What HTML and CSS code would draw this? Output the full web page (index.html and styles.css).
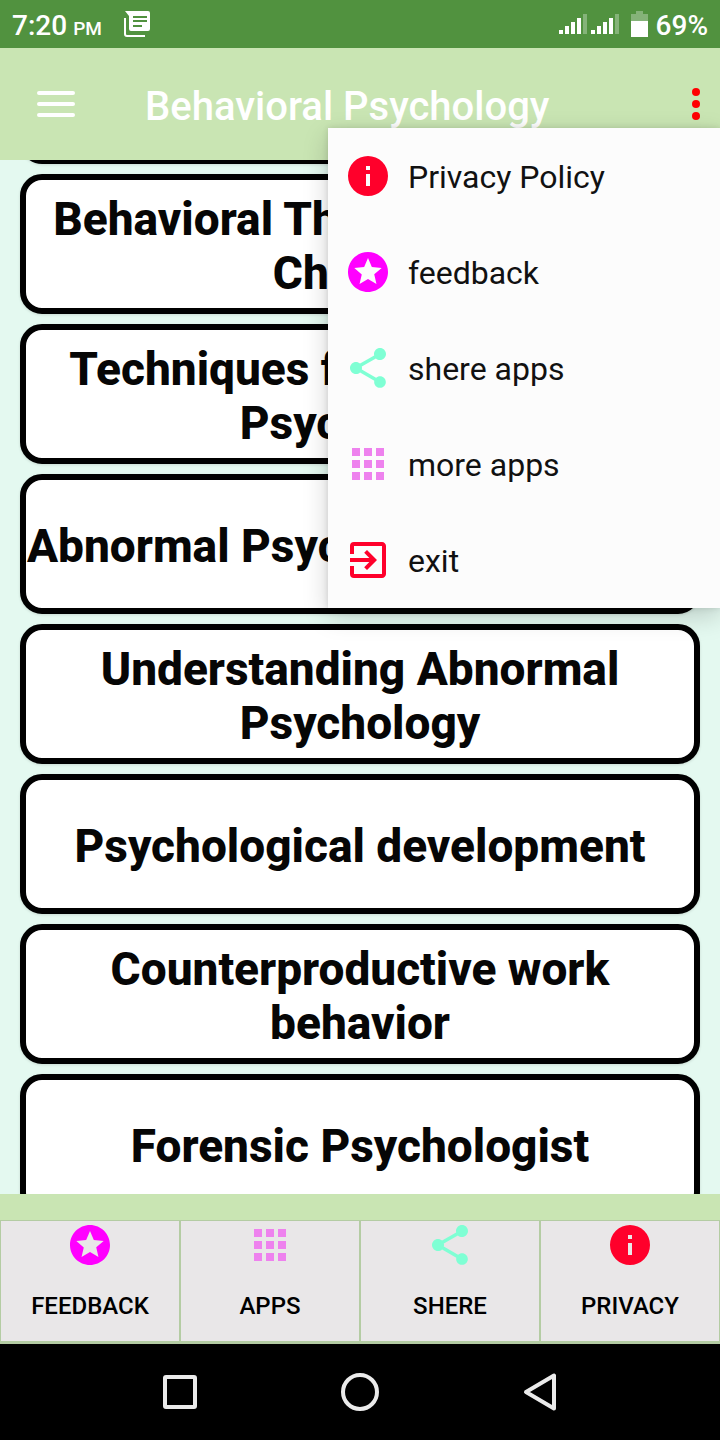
FILE: index.html
```html
<!DOCTYPE html>
<html lang="en">
<head>
<meta charset="utf-8">
<meta name="viewport" content="width=device-width, initial-scale=1">
<title>Behavioral Psychology</title>
<link rel="stylesheet" href="styles.css">
</head>
<body>
<svg class="sprite" aria-hidden="true">
  <symbol id="i-info" viewBox="0 0 24 24"><path d="M12 2a10 10 0 1 0 0 20 10 10 0 0 0 0-20zm1 15h-2v-6h2v6zm0-8h-2V7h2v2z"/></symbol>
  <symbol id="i-star" viewBox="0 0 24 24"><path d="M11.99 2C6.47 2 2 6.48 2 12s4.47 10 9.99 10C17.52 22 22 17.52 22 12S17.52 2 11.99 2zm4.24 16L12 15.45 7.77 18l1.12-4.81-3.73-3.23 4.92-.42L12 5l1.92 4.53 4.92.42-3.73 3.23L16.23 18z"/></symbol>
  <symbol id="i-share" viewBox="0 0 24 24"><path d="M18 16.08c-.76 0-1.44.3-1.96.77L8.91 12.7c.05-.23.09-.46.09-.7s-.04-.47-.09-.7l7.05-4.11c.54.5 1.25.81 2.04.81 1.66 0 3-1.34 3-3s-1.34-3-3-3-3 1.34-3 3c0 .24.04.47.09.7L8.04 9.81C7.5 9.31 6.79 9 6 9c-1.66 0-3 1.34-3 3s1.34 3 3 3c.79 0 1.5-.31 2.04-.81l7.12 4.16c-.05.21-.08.43-.08.65 0 1.61 1.31 2.92 2.92 2.92s2.92-1.31 2.92-2.92-1.31-2.92-2.92-2.92z"/></symbol>
  <symbol id="i-apps" viewBox="0 0 24 24"><path d="M4 8h4V4H4v4zm6 12h4v-4h-4v4zm-6 0h4v-4H4v4zm0-6h4v-4H4v4zm6 0h4v-4h-4v4zm6-10v4h4V4h-4zm-6 4h4V4h-4v4zm6 6h4v-4h-4v4zm0 6h4v-4h-4v4z"/></symbol>
  <symbol id="i-exit" viewBox="0 0 24 24"><path d="M10.09 15.59L11.5 17l5-5-5-5-1.41 1.41L12.67 11H3v2h9.67l-2.58 2.59zM19 3H5a2 2 0 0 0-2 2v4h2V5h14v14H5v-4H3v4a2 2 0 0 0 2 2h14c1.1 0 2-.9 2-2V5c0-1.1-.9-2-2-2z"/></symbol>
</svg>
<div class="screen">
  <div class="status">
    <span class="clock">7:20<small>PM</small></span>
    <svg class="news" viewBox="0 0 26 26" width="26" height="26" aria-hidden="true"><path fill="#fff" fill-rule="evenodd" d="M1 0h23q2 0 2 2v16q0 2-2 2H7q-2 0-2-2V5zM9 5v2h14V5zM9 9v2h14V9zM9 14v2h9v-2z"/><path fill="none" stroke="#fff" stroke-width="2" d="M1 7v16q0 2 2 2h18"/></svg>
    <svg class="signal" viewBox="0 0 60 20" width="60" height="20" aria-hidden="true"><g fill="#fff"><path d="M0 16h4v4H0zM6 12h4v8H6zM12 8h4v12h-4zM18 4h4v16h-4zM32 16h4v4h-4zM38 12h4v8h-4zM44 8h4v12h-4zM50 4h4v16h-4z"/><path opacity=".3" d="M24 0h4v20h-4zM56 0h4v20h-4z"/></g></svg>
    <svg class="battery" viewBox="0 0 17 26" width="17" height="26" aria-hidden="true"><path fill="#fff" opacity=".3" d="M5 0h7v3h5v7H0V3h5z"/><path fill="#fff" d="M0 10h17v16H0z"/></svg>
    <span class="percent">69%</span>
  </div>
  <header class="appbar">
    <button class="icon-button" aria-label="Open navigation"><svg viewBox="0 0 38 26" width="38" height="26"><path stroke="#fff" stroke-width="4" stroke-linecap="round" d="M2 2h34M2 13h34M2 24h34"/></svg></button>
    <h1>Behavioral Psychology</h1>
    <button class="icon-button more" aria-label="More options"><svg viewBox="0 0 8 32" width="8" height="32" fill="red"><circle cx="4" cy="4" r="4"/><circle cx="4" cy="16" r="4"/><circle cx="4" cy="28" r="4"/></svg></button>
  </header>
  <main class="topics">
    <div class="topic-list">
      <button class="topic">Psychology</button>
      <button class="topic">Behavioral Therapy for Young<br>Children</button>
      <button class="topic">Techniques from Behavioral<br>Psychology</button>
      <button class="topic">Abnormal Psychology Disorders</button>
      <button class="topic">Understanding Abnormal Psychology</button>
      <button class="topic">Psychological development</button>
      <button class="topic">Counterproductive work behavior</button>
      <button class="topic">Forensic Psychologist</button>
    </div>
  </main>
  <footer class="actions">
    <button class="action"><svg class="icon magenta"><use href="#i-star"/></svg><span>FEEDBACK</span></button>
    <button class="action"><svg class="icon violet"><use href="#i-apps"/></svg><span>APPS</span></button>
    <button class="action"><svg class="icon aqua"><use href="#i-share"/></svg><span>SHERE</span></button>
    <button class="action"><svg class="icon red"><use href="#i-info"/></svg><span>PRIVACY</span></button>
  </footer>
  <nav class="system" aria-label="System">
    <button class="icon-button" aria-label="Recent"><svg viewBox="0 0 40 40" width="40" height="40"><rect x="5" y="5" width="30" height="30" rx="1"/></svg></button>
    <button class="icon-button" aria-label="Home"><svg viewBox="0 0 40 40" width="40" height="40"><circle cx="20" cy="20" r="17"/></svg></button>
    <button class="icon-button" aria-label="Back"><svg viewBox="0 0 40 40" width="40" height="40"><path d="M34 3.500v33L6 20z"/></svg></button>
  </nav>
  <div class="menu" role="menu">
    <button class="menu-item" role="menuitem"><svg class="icon red"><use href="#i-info"/></svg><span>Privacy Policy</span></button>
    <button class="menu-item" role="menuitem"><svg class="icon magenta"><use href="#i-star"/></svg><span>feedback</span></button>
    <button class="menu-item" role="menuitem"><svg class="icon aqua"><use href="#i-share"/></svg><span>shere apps</span></button>
    <button class="menu-item" role="menuitem"><svg class="icon violet"><use href="#i-apps"/></svg><span>more apps</span></button>
    <button class="menu-item" role="menuitem"><svg class="icon red"><use href="#i-exit"/></svg><span>exit</span></button>
  </div>
</div>
</body>
</html>
```
FILE: styles.css
```css
* { box-sizing: border-box; }
body { margin: 0; font-family: Roboto, "Liberation Sans", sans-serif; }
button { font: inherit; color: inherit; border: 0; padding: 0; background: none; }
svg { display: block; flex: none; }
.sprite { position: absolute; width: 0; height: 0; }
.screen { position: relative; height: 100vh; display: flex; flex-direction: column; overflow: hidden; background: #e4f9f0; }

.status { flex: none; height: 48px; display: flex; align-items: center; padding: 0 12px; background: #51923f; color: #fff; font-size: 28px; font-weight: 500; }
.clock, .percent { padding-top: 2px; }
.clock small { margin-left: 6px; font-size: 19px; }
.news { margin-left: 22px; }
.signal { margin-left: auto; }
.battery { margin: 0 8px 0 12px; }

.appbar { flex: none; height: 112px; display: flex; align-items: center; padding: 0 20px 0 37px; background: #c9e5b3; color: #fff; }
.appbar h1 { flex: 1; margin: 6px 0 0 70px; font-size: 40px; font-weight: 500; line-height: 48px; }
.icon-button { display: flex; align-items: center; justify-content: center; }

.topics { flex: 1; min-height: 0; overflow: hidden; padding: 0 20px; }
.topic-list { display: flex; flex-direction: column; gap: 10px; margin-top: -136px; }
.topic { flex: none; height: 140px; padding-top: 4px; border: 6px solid #000; border-radius: 22px; background: #fff; color: #060606; font-size: 46px; font-weight: 800; line-height: 54px; box-shadow: 0 1px 3px rgba(0, 0, 0, .12); }

.actions { flex: none; display: grid; grid-template-columns: repeat(4, 1fr); gap: 2px; padding: 27px 1px 3px; background: linear-gradient(#c9e5b3 26px, #b4cca3 26px); }
.action { height: 120px; display: flex; flex-direction: column; align-items: center; gap: 23px; background: #e9e7e8; color: #000; font-size: 24px; font-weight: 500; line-height: 28px; }
.icon { width: 48px; height: 48px; fill: currentColor; }
.red { color: #ff002b; }
.magenta { color: #f0f; }
.violet { color: #ee82ee; }
.aqua { color: #7fffd4; }
.menu-item span { padding-top: 2px; color: #111; }

.system { flex: none; height: 96px; display: flex; justify-content: center; gap: 140px; background: #000; }
.system svg { fill: none; stroke: #ebebeb; stroke-width: 4; stroke-linejoin: round; }

.menu { position: absolute; top: 128px; right: 0; width: 392px; background: #fcfcfc; box-shadow: 0 8px 24px rgba(0, 0, 0, .18), 0 0 6px rgba(0, 0, 0, .12); }
.menu-item { width: 100%; height: 96px; display: flex; align-items: center; gap: 16px; padding-left: 16px; font-size: 32px; }
```
